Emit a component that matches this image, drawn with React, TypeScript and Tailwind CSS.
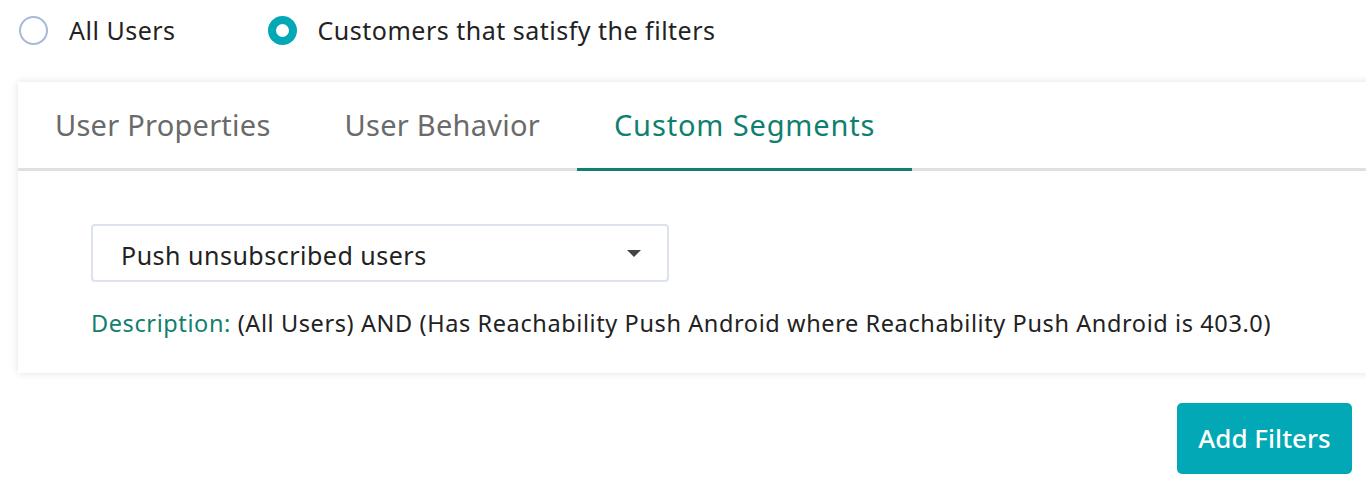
const font = { fontFamily: "'Noto Sans', sans-serif" };

function Radio({ checked, label }: { checked?: boolean; label: string }) {
  return (
    <label className="flex items-center gap-[21px]">
      {checked ? (
        <span className="w-[29px] h-[29px] rounded-full border-[8px] border-[#02a8b5] bg-white" />
      ) : (
        <span className="w-[29px] h-[29px] rounded-full border-[2px] border-[#a9b9d6] bg-white" />
      )}
      <span className="text-[25px] leading-[34px] tracking-[0.5px] text-[#222]">{label}</span>
    </label>
  );
}

const tabs = ["User Properties", "User Behavior", "Custom Segments"];

export default function App() {
  return (
    <div className="w-[1366px] h-[492px] bg-white overflow-hidden" style={font}>
      <div className="flex items-center gap-[92px] pl-[19px] pt-[16px] h-[44px]">
        <Radio label="All Users" />
        <Radio checked label="Customers that satisfy the filters" />
      </div>

      <div className="ml-[18px] mt-[38px] w-[1400px] bg-white shadow-[0_0_8px_rgba(0,0,0,0.12)]">
        <div className="flex h-[89px] border-b-[3px] border-[#e0e0e0]">
          {tabs.map((t, i) => {
            const active = i === 2;
            return (
              <div
                key={t}
                className={
                  active
                    ? "flex items-center justify-center px-[37px] text-[29px] tracking-[0.85px] text-[#0f7f70] border-b-[3px] border-[#0f7f70] mb-[-3px]"
                    : "flex items-center px-[37px] text-[29px] tracking-[0.25px] text-[#6a6a6a]"
                }
              >
                {t}
              </div>
            );
          })}
        </div>

        <div className="pl-[73px] pt-[53px] pb-[34px]">
          <div className="flex items-center justify-between w-[578px] h-[58px] border-2 border-[#dde2ef] rounded-[4px] pl-[28px] pr-[26px]">
            <span className="pt-[5px] text-[25px] tracking-[0.5px] text-[#222]">Push unsubscribed users</span>
            <span className="w-0 h-0 border-l-[7px] border-r-[7px] border-t-[7px] border-l-transparent border-r-transparent border-t-[#444]" />
          </div>
          <p className="mt-[25px] text-[23.5px] leading-[32px] tracking-[0.6px] text-[#222]">
            <span className="text-[#12806f]">Description:</span> (All Users) AND (Has Reachability Push Android where Reachability Push Android is 403.0)
          </p>
        </div>
      </div>

      <div className="flex justify-end pr-[14px] mt-[30px]">
        <button className="w-[175px] h-[71px] rounded-[5px] bg-[#02a8b5] text-white text-[26px] font-medium">
          Add Filters
        </button>
      </div>
    </div>
  );
}
